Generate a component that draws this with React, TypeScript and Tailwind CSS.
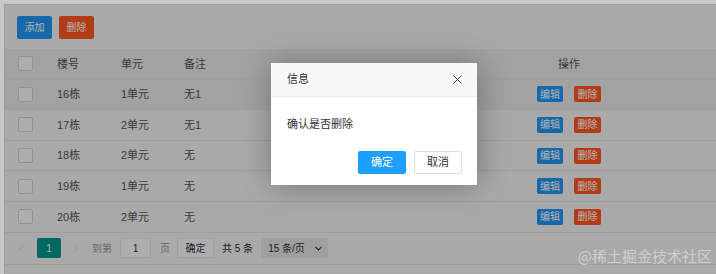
import { X, ChevronLeft, ChevronRight, ChevronDown } from "lucide-react";

const rows = [
  { no: "16栋", unit: "1单元", note: "无1", hover: true },
  { no: "17栋", unit: "2单元", note: "无1" },
  { no: "18栋", unit: "2单元", note: "无" },
  { no: "19栋", unit: "1单元", note: "无" },
  { no: "20栋", unit: "2单元", note: "无" },
];

function Checkbox() {
  return <span className="block w-[15px] h-[15px] border border-[#d2d2d2] bg-[#f8f8f8] rounded-[2px]" />;
}

function Row({ cells, header, hover }: { cells: React.ReactNode[]; header?: boolean; hover?: boolean }) {
  return (
    <div
      className={`flex items-center h-[30.6px] border-b border-[#e2e2e2] ${
        header || hover ? "bg-[#e8e8e8]" : ""
      }`}
    >
      <div className="w-[52px] pl-[13px]">
        <Checkbox />
      </div>
      <div className="w-[64px]">{cells[0]}</div>
      <div className="w-[63px]">{cells[1]}</div>
      <div className="w-[317px]">{cells[2]}</div>
      <div className="w-[136px] flex justify-center gap-[11px]">{cells[3]}</div>
      <div className="flex-1" />
    </div>
  );
}

export default function App() {
  const font = "font-['Liberation_Sans','Noto_Sans_CJK_SC',sans-serif]";
  return (
    <div className={`relative w-[716px] h-[274px] overflow-hidden bg-[#c8c8c8] ${font}`}>
      <div className="absolute left-[4px] top-[4px] right-0 bottom-0 bg-[#f2f2f2] border-l border-t border-[#e2e2e2]">
        {/* toolbar */}
        <div className="flex gap-[7px] pl-[12px] pt-[11px] h-[44px]">
          <button className="w-[35px] h-[23px] bg-[#2196F3] text-white text-[10px] rounded-[2px]">添加</button>
          <button className="w-[35px] h-[23px] bg-[#FF5722] text-white text-[10px] rounded-[2px]">删除</button>
        </div>

        {/* table */}
        <div className="text-[11px] text-[#555]">
          <Row header cells={["楼号", "单元", "备注", <span key="op">操作</span>]} />
          {rows.map((r) => (
            <Row
              key={r.no}
              hover={r.hover}
              cells={[
                r.no,
                r.unit,
                r.note,
                <>
                  <span className="w-[26px] h-[16px] flex items-center justify-center bg-[#2196F3] text-white text-[10px] rounded-[2px]">编辑</span>
                  <span className="w-[27px] h-[16px] flex items-center justify-center bg-[#FF5722] text-white text-[10px] rounded-[2px]">删除</span>
                </>,
              ]}
            />
          ))}
        </div>

        {/* pagination */}
        <div className="flex items-center h-[32px] border-b border-[#e2e2e2] text-[10px] text-[#333]">
          <ChevronLeft size={13} strokeWidth={1.5} className="ml-[10px] text-[#d2d2d2]" />
          <span className="ml-[9px] w-[24px] h-[20px] flex items-center justify-center bg-[#009688] text-white rounded-[2px]">1</span>
          <ChevronRight size={13} strokeWidth={1.5} className="ml-[9px] text-[#d2d2d2]" />
          <span className="ml-[9px] text-[#999]">到第</span>
          <span className="ml-[8px] w-[31px] h-[20px] flex items-center justify-center bg-[#fafafa] border border-[#e2e2e2] rounded-[2px]">1</span>
          <span className="ml-[9px] text-[#999]">页</span>
          <span className="ml-[7px] w-[37px] h-[20px] flex items-center justify-center bg-[#fafafa] border border-[#e2e2e2] rounded-[2px]">确定</span>
          <span className="ml-[8px] text-[#333]">共 5 条</span>
          <span className="ml-[8px] w-[67px] h-[20px] flex items-center justify-between pl-[7px] pr-[4px] bg-[#e4e4e4] rounded-[2px]">
            15 条/页
            <ChevronDown size={11} strokeWidth={2.2} />
          </span>
        </div>
      </div>

      {/* shade */}
      <div className="absolute left-[4px] top-[4px] right-0 bottom-0 bg-black/30" />

      {/* watermark */}
      <div className="absolute right-[4px] top-[246px] text-[15px] leading-[20px] text-white/45 font-['Noto_Sans_CJK_SC',serif]">
        @稀土掘金技术社区
      </div>

      {/* dialog */}
      <div className="absolute left-[271px] top-[63px] w-[206px] h-[122px] bg-white shadow-[1px_1px_30px_rgba(0,0,0,0.3)] text-[11px] text-[#333]">
        <div className="flex items-center justify-between h-[34px] bg-[#f8f8f8] border-b border-[#eee] pl-[16px] pr-[12px]">
          <span>信息</span>
          <X size={15} strokeWidth={1.5} className="text-[#333]" />
        </div>
        <div className="pl-[16px] pt-[19px] h-[54px]">确认是否删除</div>
        <div className="flex justify-end gap-[8px] pr-[15px]">
          <span className="w-[48px] h-[23px] flex items-center justify-center bg-[#1E9FFF] text-white rounded-[2px]">确定</span>
          <span className="w-[48px] h-[23px] flex items-center justify-center bg-white border border-[#dedede] rounded-[2px]">取消</span>
        </div>
      </div>
    </div>
  );
}
